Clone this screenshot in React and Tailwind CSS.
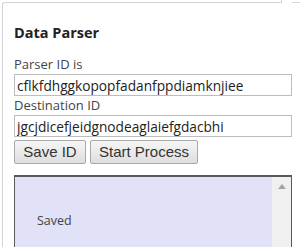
export default function App() {
  return (
    <div className="relative w-[300px] h-[247px] overflow-hidden bg-white">
      {/* top edge of the popup, with the notch gap on the right */}
      <div className="absolute left-[281px] top-0 w-[11px] h-[4px] bg-white" />
      <div className="absolute left-[280px] top-0 w-[2px] h-[3px] border-r border-[#d4d4d4]" />
      <div className="absolute left-[292px] top-[2px] w-[8px] h-[1px] bg-[#d4d4d4]" />

      <div className="ml-[2px] mt-[2px] h-[280px] border-l border-t border-[#d4d4d4] rounded-tl-[3px] pl-[11px] pr-[8px] pt-[21px] font-['Open_Sans',sans-serif]">
        <h1 className="text-[14.5px] leading-[18px] font-bold text-[#222]">Data Parser</h1>

        <div className="mt-[13px]">
          <label className="block text-[13px] leading-[18px] text-[#444]">Parser ID is</label>
          <input
            readOnly
            value="cflkfdhggkopopfadanfppdiamknjiee"
            className="block w-[278px] h-[22px] mt-[1px] border border-[#bdbdbd] px-[2px] text-[13.7px] text-[#222] outline-none font-['Open_Sans',sans-serif]"
          />
        </div>

        <div>
          <label className="block text-[13px] leading-[19px] text-[#444]">Destination ID</label>
          <input
            readOnly
            value="jgcjdicefjeidgnodeaglaiefgdacbhi"
            className="block w-[278px] h-[22px] border border-[#bdbdbd] px-[2px] text-[13.7px] text-[#222] outline-none font-['Open_Sans',sans-serif]"
          />
        </div>

        <div className="flex gap-[4px] mt-[3px]">
          <button className="w-[72px] h-[24px] border border-[#a9a9a9] rounded-[2px] bg-gradient-to-b from-[#f6f6f6] to-[#dedede] text-[15px] text-[#333] font-['Liberation_Sans',sans-serif]">
            Save ID
          </button>
          <button className="w-[108px] h-[24px] border border-[#a9a9a9] rounded-[2px] bg-gradient-to-b from-[#f6f6f6] to-[#dedede] text-[15px] text-[#333] font-['Liberation_Sans',sans-serif]">
            Start Process
          </button>
        </div>

        <div className="mt-[11px] w-[278px] h-[100px] flex border-t-2 border-l border-r border-[#5a5a5a]">
          <div className="flex-1 bg-[#e1e1f8] pl-[22px] pt-[30px]">
            <span className="text-[12.5px] text-[#444]">Saved</span>
          </div>
          <div className="w-[19px] bg-[#f0f0f0] flex justify-center pt-[7px]">
            <svg width="8" height="5" viewBox="0 0 8 5">
              <path d="M4 0 L8 5 L0 5 Z" fill="#a3a3a3" />
            </svg>
          </div>
        </div>
      </div>
    </div>
  );
}
